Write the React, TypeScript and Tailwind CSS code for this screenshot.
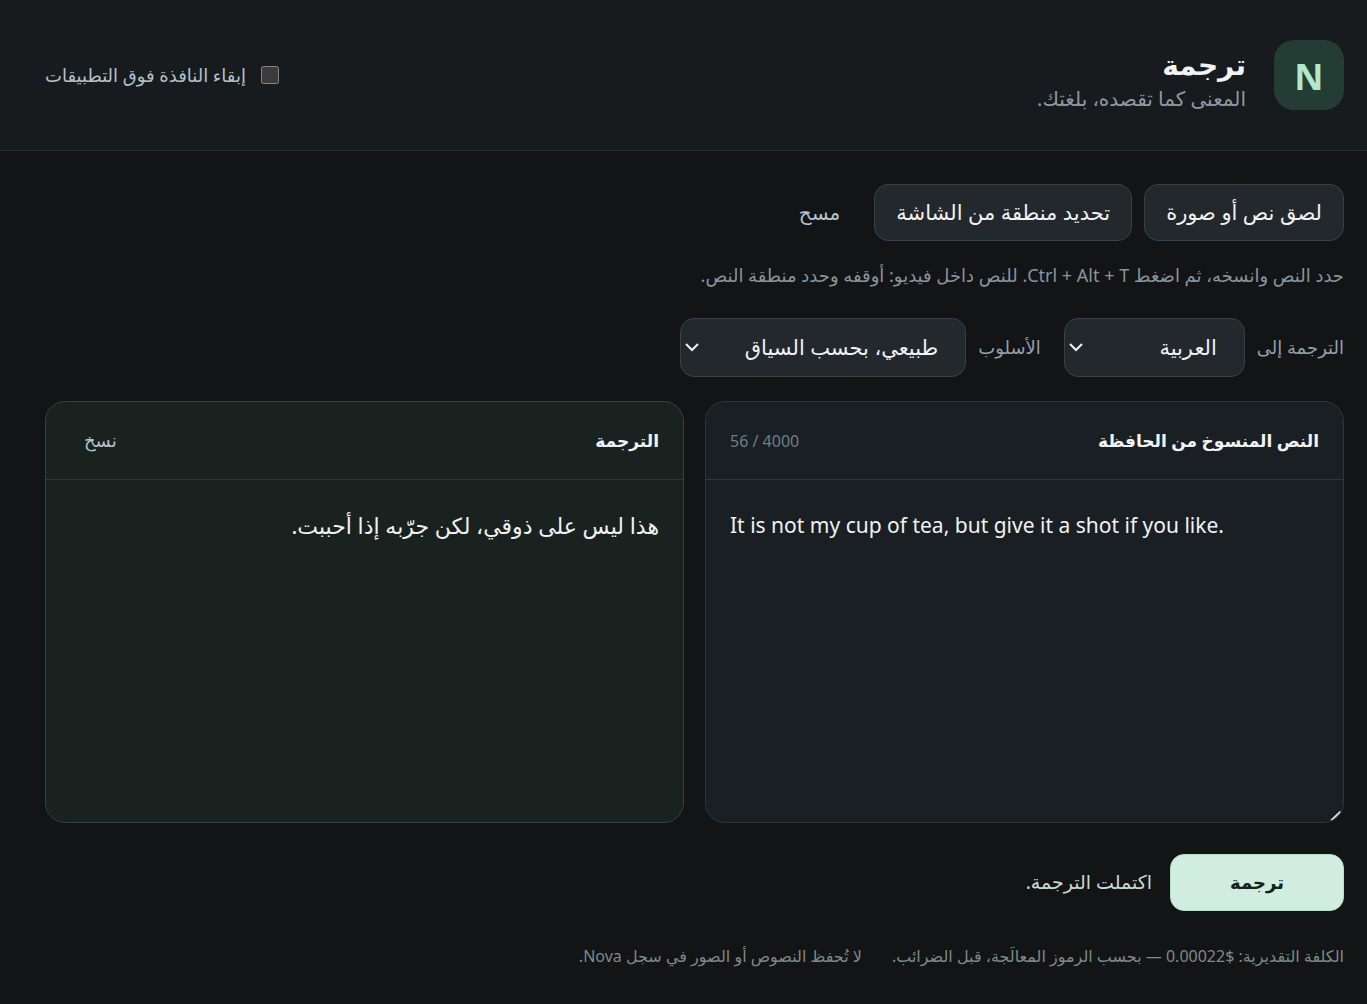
import { useId, useState } from "react";
import type { ReactNode } from "react";

const MAX_CHARS = 4000;

const LANGUAGES = ["العربية", "English"];
const STYLES = ["طبيعي، بحسب السياق", "رسمي", "حرفي"];

type SelectFieldProps = {
  label: string;
  options: string[];
  className: string;
};

function SelectField({ label, options, className }: SelectFieldProps) {
  const id = useId();
  const [value, setValue] = useState(options[0]);

  return (
    <div className="flex items-center gap-3">
      <label htmlFor={id} className="text-[18px] text-[#93a0aa]">
        {label}
      </label>
      <div className={`relative ${className}`}>
        <select
          id={id}
          value={value}
          onChange={(e) => setValue(e.target.value)}
          className="h-[59px] w-full appearance-none rounded-[14px] border border-[#384047] bg-[#23282c] ps-[27px] pe-8 text-[21px] text-[#f0f2f4]"
        >
          {options.map((o) => (
            <option key={o}>{o}</option>
          ))}
        </select>
        <svg
          viewBox="0 0 14 10"
          className="pointer-events-none absolute left-[5px] top-[25px] h-2.5 w-3.5"
          fill="none"
          stroke="#f0f2f4"
          strokeWidth="2"
        >
          <path d="M1 1 7 7l6-6" />
        </svg>
      </div>
    </div>
  );
}

type PanelProps = {
  title: string;
  aside: ReactNode;
  tone: string;
  children: ReactNode;
};

function Panel({ title, aside, tone, children }: PanelProps) {
  return (
    <section className={`relative flex h-[422px] flex-col overflow-hidden rounded-[20px] border ${tone}`}>
      <div className="flex h-[78px] shrink-0 items-center justify-between border-b border-[#2d383b] px-6">
        <h2 className="text-[17px] font-bold text-[#f0f2f4]">{title}</h2>
        {aside}
      </div>
      {children}
    </section>
  );
}

export default function App() {
  const [onTop, setOnTop] = useState(false);
  const [source, setSource] = useState("It is not my cup of tea, but give it a shot if you like.");

  return (
    <div
      dir="rtl"
      className="min-h-screen bg-[#131416] font-['Noto_Sans','DejaVu_Sans',sans-serif] text-[#f0f2f4] scheme-dark"
    >
      <header className="flex h-[151px] items-center justify-between border-b border-[#2a2e32] bg-[#171b1d] pr-[23px] pl-[45px]">
        <div className="flex items-center gap-7">
          <div className="flex size-[70px] items-center justify-center rounded-[20px] bg-[#233c34] pt-1 text-4xl font-bold text-[#afe8ca]">
            N
          </div>
          <div className="pt-3">
            <h1 className="text-[28px] leading-9 font-bold">ترجمة</h1>
            <p className="text-[20px] leading-[34px] text-[#8f98a1]">المعنى كما تقصده، بلغتك.</p>
          </div>
        </div>
        <label className="flex items-center gap-[15px] text-[18px] text-[#b4c1c8]">
          <input
            type="checkbox"
            checked={onTop}
            onChange={(e) => setOnTop(e.target.checked)}
            className="size-[18px]"
          />
          إبقاء النافذة فوق التطبيقات
        </label>
      </header>

      <main className="pt-[33px] pr-[23px] pb-8 pl-[45px]">
        <div className="flex gap-3">
          <button className="h-[57px] rounded-[14px] border border-[#384047] bg-[#23282c] px-[21px] text-[21px]">
            لصق نص أو صورة
          </button>
          <button className="h-[57px] rounded-[14px] border border-[#384047] bg-[#23282c] px-[21px] text-[21px]">
            تحديد منطقة من الشاشة
          </button>
          <button className="h-[57px] px-[22px] text-[20px] text-[#b4c4cc]">مسح</button>
        </div>

        <p className="mt-[18px] text-[18px] leading-8 text-[#87959e]">
          حدد النص وانسخه، ثم اضغط Ctrl + Alt + T. للنص داخل فيديو: أوقفه وحدد منطقة النص.
        </p>

        <div className="mt-[27px] flex gap-[23px]">
          <SelectField label="الترجمة إلى" options={LANGUAGES} className="w-[181px]" />
          <SelectField label="الأسلوب" options={STYLES} className="w-[286px]" />
        </div>

        <div className="mt-6 grid grid-cols-2 gap-[21px]">
          <Panel
            title="النص المنسوخ من الحافظة"
            tone="border-[#2d363b] bg-[#1a1f23]"
            aside={
              <span dir="ltr" className="text-base text-[#6f7e86]">
                {source.length} / {MAX_CHARS}
              </span>
            }
          >
            <textarea
              dir="ltr"
              aria-label="النص المنسوخ من الحافظة"
              maxLength={MAX_CHARS}
              value={source}
              onChange={(e) => setSource(e.target.value)}
              className="w-full flex-1 resize-none bg-transparent px-6 py-[25px] text-[21px] leading-10 outline-none"
            />
            {/* Corner grip */}
            <svg
              viewBox="0 0 12 12"
              className="pointer-events-none absolute right-px bottom-0 size-3"
              fill="none"
            >
              <path d="M0 10 9.500 0.500" stroke="#08090a" strokeWidth="1.500" />
              <path d="M1 10.500 10.500 1.500" stroke="#d5d7d9" strokeWidth="2" />
            </svg>
          </Panel>
          <Panel
            title="الترجمة"
            tone="border-[#2f443c] bg-[#1a2220]"
            aside={<button className="px-3.5 text-[18px] text-[#b4c4cc]">نسخ</button>}
          >
            <p className="px-6 py-[25px] text-[22px] leading-10">هذا ليس على ذوقي، لكن جرّبه إذا أحببت.</p>
          </Panel>
        </div>

        <div className="mt-[31px] flex items-center gap-[18px]">
          <button className="h-[57px] w-[174px] rounded-[14px] border border-[#b3dec8] bg-[#d1eddf] text-[18px] font-bold text-[#14231c]">
            ترجمة
          </button>
          <p role="status" className="text-[19px] text-[#c3dccf]">
            اكتملت الترجمة.
          </p>
        </div>

        <footer className="mt-[29px] flex flex-wrap gap-x-[30px] text-base leading-8 text-[#7d8b86]">
          <span>الكلفة التقديرية: $0.00022 — بحسب الرموز المعالَجة، قبل الضرائب.</span>
          <span>لا تُحفظ النصوص أو الصور في سجل Nova.</span>
        </footer>
      </main>
    </div>
  );
}
